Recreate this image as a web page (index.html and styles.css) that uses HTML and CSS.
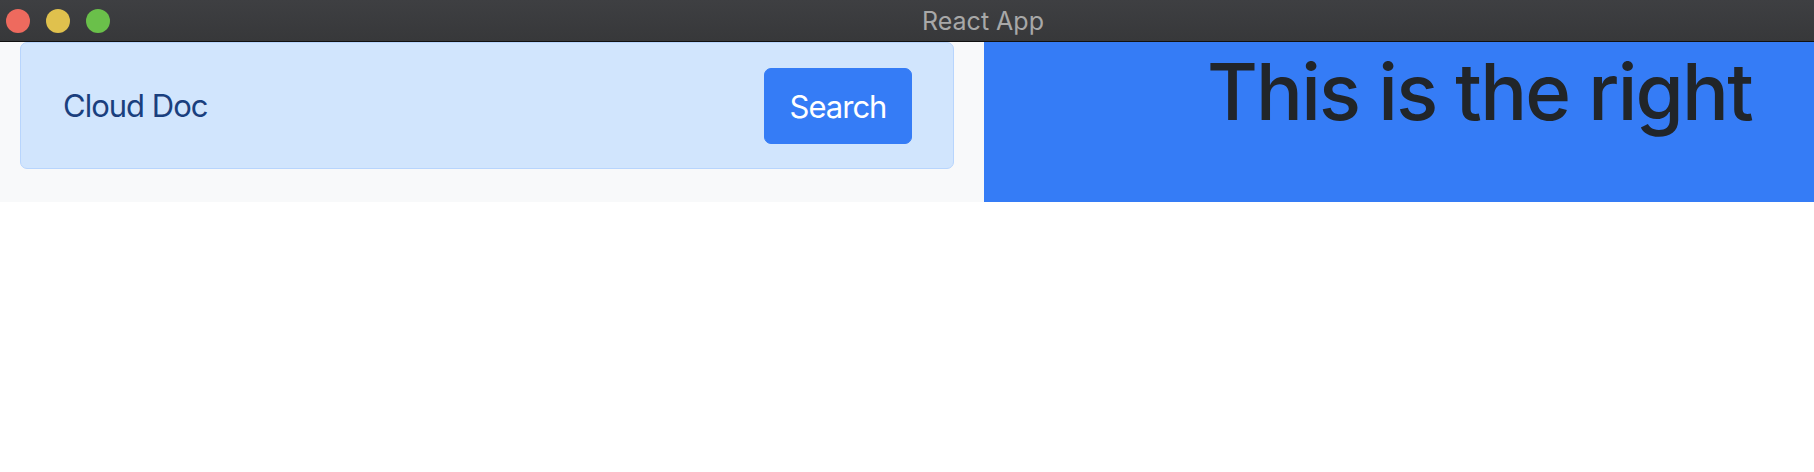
FILE: index.html
```html
<!DOCTYPE html>
<html>
<head>
<meta charset="utf-8">
<title>React App</title>
<link rel="stylesheet" href="styles.css">
</head>
<body>
<div class="titlebar">
  <div class="lights">
    <span class="light red"></span>
    <span class="light yellow"></span>
    <span class="light green"></span>
  </div>
  <div class="title">React App</div>
</div>
<div class="app">
  <div class="left">
    <div class="card">
      <span class="brand">Cloud Doc</span>
      <button class="btn">Search</button>
    </div>
  </div>
  <div class="right">
    <h1 class="headline">This is the right</h1>
  </div>
</div>
</body>
</html>
```
FILE: styles.css
```css
* { box-sizing: border-box; }
html, body { margin: 0; padding: 0; background: #fff; }
body { font-family: Inter, "Noto Sans", sans-serif; }

.titlebar {
  position: relative;
  height: 42px;
  background: linear-gradient(#3e3f42, #37383a);
  border-bottom: 1px solid #111;
  display: flex;
  align-items: center;
}
.lights {
  display: flex;
  gap: 16px;
  padding-left: 6px;
}
.light {
  width: 24px;
  height: 24px;
  border-radius: 50%;
  display: block;
}
.red { background: #ee6a5e; }
.yellow { background: #e0c14d; }
.green { background: #6ac04a; }
.title {
  position: absolute;
  left: 0;
  right: 0;
  top: 0;
  bottom: 0;
  display: flex;
  align-items: center;
  justify-content: center;
  color: #a8a8a8;
  font-size: 25px;
  padding-left: 152px;
}

.app {
  display: flex;
  height: 160px;
}
.left {
  width: 984px;
  background: #f8f9fa;
  padding: 0 30px 0 20px;
}
.card {
  height: 127px;
  background: #d1e5fd;
  border: 1px solid #b8d5fd;
  border-radius: 7px;
  display: flex;
  align-items: center;
  justify-content: space-between;
  padding: 0 41px 0 42px;
}
.brand {
  color: #1a3f7e;
  font-size: 31px;
  letter-spacing: -1px;
}
.btn {
  width: 148px;
  height: 76px;
  background: #357cf6;
  border: 1px solid #357cf6;
  border-radius: 7px;
  color: #fff;
  font-family: inherit;
  font-size: 31px;
  letter-spacing: -1px;
  padding: 0;
  margin-top: 1px;
}
.right {
  flex: 1;
  background: #357cf6;
}
.headline {
  margin: 0;
  padding: 3px 0 0 223px;
  font-weight: 500;
  font-size: 78px;
  letter-spacing: -1.8px;
  line-height: 1.2;
  color: #212529;
  white-space: nowrap;
}
```
